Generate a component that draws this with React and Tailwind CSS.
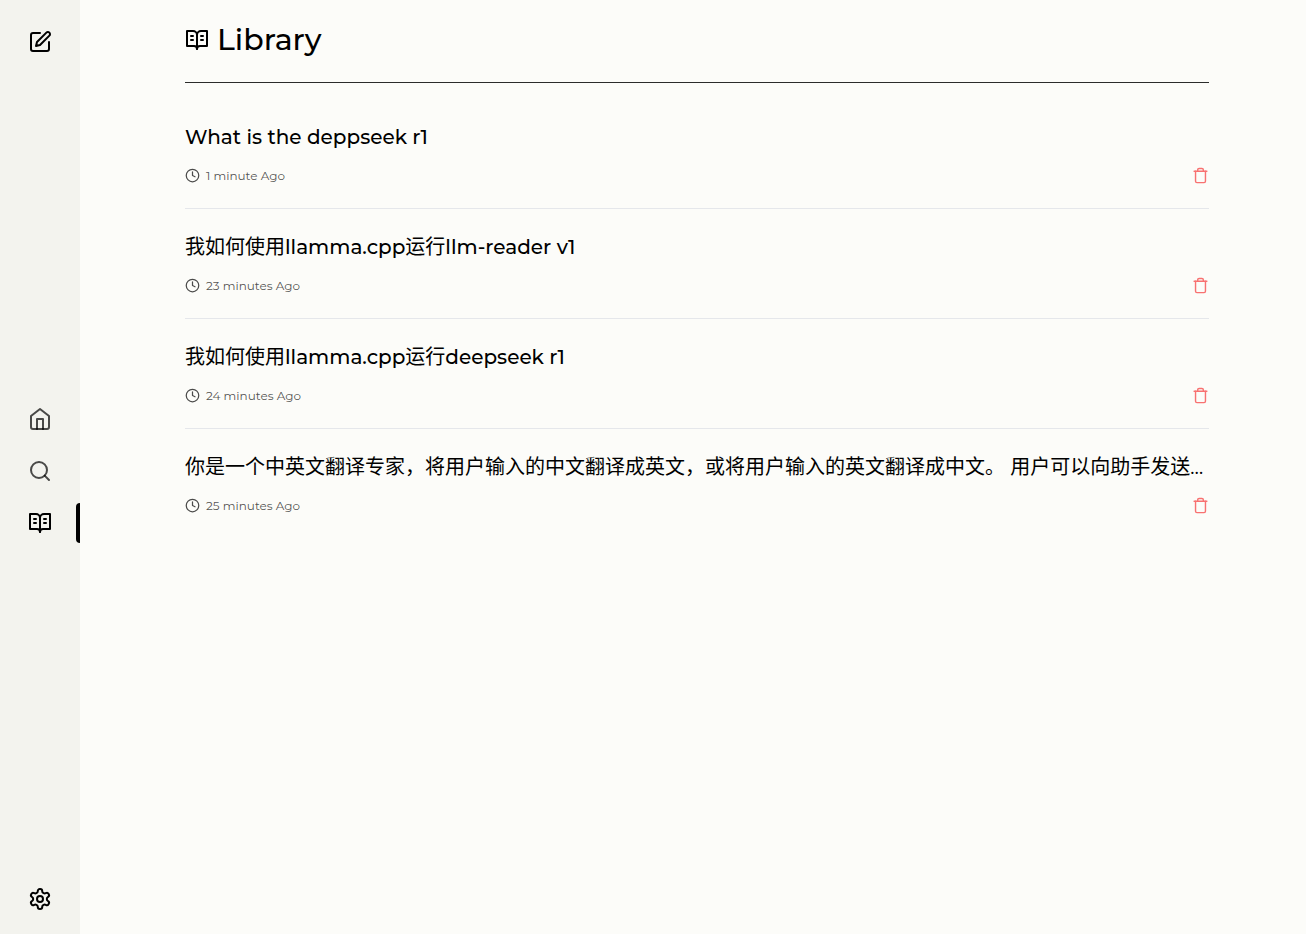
import { Clock, Search, Trash } from 'lucide-react'
import clsx from 'clsx'

function Icon24({ children }) {
  return (
    <svg
      width="24"
      height="24"
      viewBox="0 0 24 24"
      fill="none"
      stroke="currentColor"
      strokeWidth="2"
      strokeLinecap="round"
      strokeLinejoin="round"
      aria-hidden="true"
    >
      {children}
    </svg>
  )
}

function PenIcon() {
  return (
    <Icon24>
      <path d="M12 3H5a2 2 0 0 0-2 2v14a2 2 0 0 0 2 2h14a2 2 0 0 0 2-2v-7" />
      <path d="M18.375 2.625a2.121 2.121 0 1 1 3 3L12 15l-4 1 1-4Z" />
    </Icon24>
  )
}

function HomeIcon() {
  return (
    <Icon24>
      <path d="m3 9 9-7 9 7v11a2 2 0 0 1-2 2H5a2 2 0 0 1-2-2z" />
      <path d="M9 22V12h6v10" />
    </Icon24>
  )
}

function BookIcon() {
  return (
    <Icon24>
      <path d="M2 3h6a4 4 0 0 1 4 4v14a3 3 0 0 0-3-3H2z" />
      <path d="M22 3h-6a4 4 0 0 0-4 4v14a3 3 0 0 1 3-3h7z" />
      <path d="M6 8h2M6 12h2M16 8h2M16 12h2" />
    </Icon24>
  )
}

function GearIcon() {
  return (
    <Icon24>
      <path d="M12.22 2h-.44a2 2 0 0 0-2 2v.18a2 2 0 0 1-1 1.73l-.43.25a2 2 0 0 1-2 0l-.15-.08a2 2 0 0 0-2.73.73l-.22.38a2 2 0 0 0 .73 2.73l.15.1a2 2 0 0 1 1 1.72v.51a2 2 0 0 1-1 1.74l-.15.09a2 2 0 0 0-.73 2.73l.22.38a2 2 0 0 0 2.73.73l.15-.08a2 2 0 0 1 2 0l.43.25a2 2 0 0 1 1 1.73V20a2 2 0 0 0 2 2h.44a2 2 0 0 0 2-2v-.18a2 2 0 0 1 1-1.73l.43-.25a2 2 0 0 1 2 0l.15.08a2 2 0 0 0 2.73-.73l.22-.39a2 2 0 0 0-.73-2.73l-.15-.08a2 2 0 0 1-1-1.74v-.5a2 2 0 0 1 1-1.74l.15-.09a2 2 0 0 0 .73-2.73l-.22-.38a2 2 0 0 0-2.73-.73l-.15.08a2 2 0 0 1-2 0l-.43-.25a2 2 0 0 1-1-1.73V4a2 2 0 0 0-2-2z" />
      <circle cx="12" cy="12" r="3" />
    </Icon24>
  )
}

const NAV_LINKS = [
  { Icon: HomeIcon, label: 'Home',     href: '#home',     active: false },
  { Icon: Search,   label: 'Discover', href: '#discover', active: false },
  { Icon: BookIcon, label: 'Library',  href: '#library',  active: true },
]

const CHATS = [
  { id: 1, title: 'What is the deppseek r1',              ago: '1 minute' },
  { id: 2, title: '我如何使用llamma.cpp运行llm-reader v1', ago: '23 minutes' },
  { id: 3, title: '我如何使用llamma.cpp运行deepseek r1',   ago: '24 minutes' },
  {
    id: 4,
    title: '你是一个中英文翻译专家，将用户输入的中文翻译成英文，或将用户输入的英文翻译成中文。 用户可以向助手发送需要翻译的内容',
    ago: '25 minutes',
  },
]

// Latin runs are medium, Chinese runs stay at the regular weight
function Title({ text }) {
  return text.split(/([\x21-\x7e][\x20-\x7e]*)/).map((run, i) => (
    <span key={i} className={i % 2 ? 'font-medium' : 'font-normal'}>{run}</span>
  ))
}

function Sidebar() {
  return (
    <aside className="sticky top-0 flex h-screen w-20 shrink-0 flex-col items-center justify-between bg-[#f3f3ee] pt-[30px] pb-[23px]">
      <a href="#new" aria-label="New chat">
        <PenIcon />
      </a>

      <nav className="flex w-full flex-col gap-3">
        {NAV_LINKS.map(({ Icon, label, href, active }) => (
          <a
            key={label}
            href={href}
            aria-label={label}
            aria-current={active ? 'page' : undefined}
            className={clsx(
              'relative flex h-10 w-full items-center justify-center',
              active ? 'text-black' : 'text-black/70'
            )}
          >
            <Icon />
            {active && <span className="absolute top-0 right-0 h-full w-1 rounded-l-lg bg-black" />}
          </a>
        ))}
      </nav>

      <button type="button" aria-label="Settings">
        <GearIcon />
      </button>
    </aside>
  )
}

function ChatRow({ title, ago, last }) {
  return (
    <li className={clsx('flex flex-col gap-4 py-6', !last && 'border-b border-gray-200')}>
      <a href="#chat" className="block truncate text-xl">
        <Title text={title} />
      </a>
      <div className="flex items-center justify-between">
        <div className="flex items-center gap-1.5 text-black/70">
          <Clock size={15} />
          <p className="text-xs">{ago} Ago</p>
        </div>
        <button type="button" aria-label="Delete chat" className="text-[#f87171]">
          <Trash size={17} />
        </button>
      </div>
    </li>
  )
}

export default function App() {
  return (
    <div className="flex min-h-screen bg-[#fcfcf9] font-['Montserrat','Inter','Noto_Sans_CJK_SC',sans-serif] text-black">
      <Sidebar />
      <main className="min-w-0 flex-1 pl-2">
        <div className="mx-auto max-w-5xl">
          <header className="flex items-center gap-2 border-b border-[#2b2c2b] pt-[22px] pb-6">
            <BookIcon />
            <h1 className="text-3xl font-medium">Library</h1>
          </header>
          <ul className="pt-4">
            {CHATS.map((chat, i) => (
              <ChatRow key={chat.id} {...chat} last={i === CHATS.length - 1} />
            ))}
          </ul>
        </div>
      </main>
    </div>
  )
}
